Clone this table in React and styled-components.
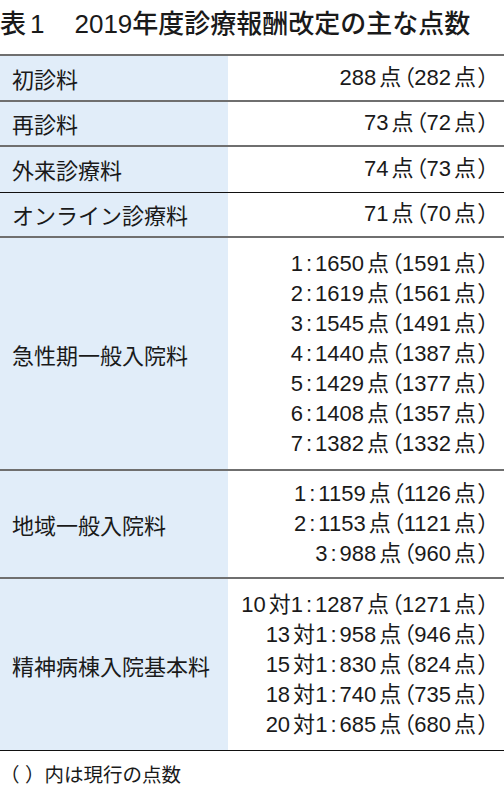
import React from "react"
import styled, { createGlobalStyle } from "styled-components"

const GlobalStyle = createGlobalStyle`
  html, body {
    margin: 0;
    padding: 0;
    background: #ffffff;
  }
  body {
    font-family: "Liberation Sans", "Noto Sans CJK JP", sans-serif;
    color: #1a1a1a;
  }
`

const Page = styled.div`
  width: 504px;
`

const Title = styled.h1`
  margin: 0;
  padding: 9px 0 15px;
  font-size: 26px;
  line-height: 30px;
  font-weight: 500;
  white-space: nowrap;
`

const TitleNum = styled.span`
  margin: 0 ${(p) => p.$space}px 0 ${(p) => p.$lead}px;
`

const Table = styled.div`
  display: grid;
  grid-template-columns: 228px 1fr;
  border-top: 2px solid #6f6f6f;
`

const Label = styled.div`
  display: flex;
  align-items: center;
  padding-left: 12px;
  background: #e1edf9;
  font-size: 22px;
  border-bottom: ${(p) => (p.$dark ? "1px solid #111" : "2px solid #6f6f6f")};
  min-height: ${(p) => p.$height}px;
`

const Values = styled.div`
  display: flex;
  flex-direction: column;
  justify-content: center;
  align-items: flex-end;
  padding-right: 15px;
  font-size: 22px;
  line-height: 30px;
  font-feature-settings: "palt";
  border-bottom: ${(p) => (p.$dark ? "1px solid #111" : "2px solid #6f6f6f")};
  min-height: ${(p) => p.$height}px;
`

const Line = styled.div`
  white-space: nowrap;
`

const Digits = styled.span`
  margin-right: ${(p) => (p.$gap ? 3 : 0)}px;
`

const Colon = styled.span`
  margin: 0 3px;
`

const Paren = styled.span`
  margin: ${(p) => (p.$open ? "0 0 0 2px" : "0 0 0 2px")};
`

const Note = styled.p`
  margin: 0;
  padding-top: 12px;
  font-size: 19.5px;
  line-height: 25px;
`

// split "1:1650点（1591点）" into runs so digits, colon and brackets get their own spacing
const Value = ({ text }) => {
  const parts = text.match(/\d+|:|（|）|[^\d:（）]+/g)
  return (
    <Line>
      {parts.map((t, i) => {
        if (/^\d+$/.test(t)) {
          const next = parts[i + 1]
          return (
            <Digits key={i} $gap={next && /^[点対]/.test(next)}>
              {t}
            </Digits>
          )
        }
        if (t === ":") return <Colon key={i}>:</Colon>
        if (t === "（") return <Paren key={i} $open>（</Paren>
        if (t === "）") return <Paren key={i}>）</Paren>
        return <span key={i}>{t}</span>
      })}
    </Line>
  )
}

const rows = [
  { label: "初診料", values: ["288点（282点）"], height: 43.5 },
  { label: "再診料", values: ["73点（72点）"], height: 43.5 },
  { label: "外来診療料", values: ["74点（73点）"], height: 44.5, dark: true },
  { label: "オンライン診療料", values: ["71点（70点）"], height: 43.5 },
  {
    label: "急性期一般入院料",
    values: [
      "1:1650点（1591点）",
      "2:1619点（1561点）",
      "3:1545点（1491点）",
      "4:1440点（1387点）",
      "5:1429点（1377点）",
      "6:1408点（1357点）",
      "7:1382点（1332点）",
    ],
    height: 231,
  },
  {
    label: "地域一般入院料",
    values: ["1:1159点（1126点）", "2:1153点（1121点）", "3:988点（960点）"],
    height: 106,
  },
  {
    label: "精神病棟入院基本料",
    values: [
      "10対1:1287点（1271点）",
      "13対1:958点（946点）",
      "15対1:830点（824点）",
      "18対1:740点（735点）",
      "20対1:685点（680点）",
    ],
    height: 171,
    dark: true,
  },
]

const App = () => (
  <Page>
    <GlobalStyle />
    <Title>
      表<TitleNum $lead={4} $space={4}>1</TitleNum>　2019年度診療報酬改定の主な点数
    </Title>
    <Table>
      {rows.map((row) => (
        <React.Fragment key={row.label}>
          <Label $height={row.height} $dark={row.dark}>
            {row.label}
          </Label>
          <Values $height={row.height} $dark={row.dark}>
            {row.values.map((v) => (
              <Value key={v} text={v} />
            ))}
          </Values>
        </React.Fragment>
      ))}
    </Table>
    <Note>（ ）内は現行の点数</Note>
  </Page>
)

export default App
